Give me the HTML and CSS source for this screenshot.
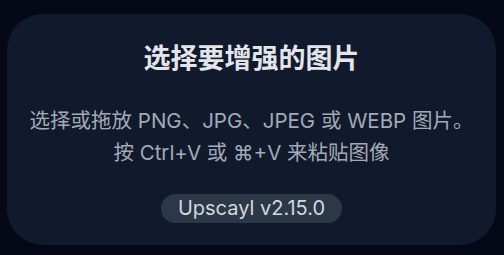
FILE: index.html
```html
<!DOCTYPE html>
<html lang="zh-CN">
<head>
<meta charset="utf-8">
<title>Upscayl</title>
<link rel="stylesheet" href="styles.css">
</head>
<body>
<main class="page">
  <section class="card">
    <h1 class="title">选择要增强的图片</h1>
    <p class="desc">选择或拖放 PNG、JPG、JPEG 或 WEBP 图片。<br>按 Ctrl+V 或 ⌘+V 来粘贴图像</p>
    <span class="badge">Upscayl v2.15.0</span>
  </section>
</main>
</body>
</html>
```

FILE: styles.css
```css
html, body {
  margin: 0;
  padding: 0;
  background: #050816;
}
body {
  width: 504px;
  height: 255px;
  overflow: hidden;
  font-family: "Inter", "Noto Sans CJK SC", sans-serif;
}
.page {
  padding: 14px 8px 10px 7px;
  height: 255px;
  box-sizing: border-box;
}
.card {
  height: 100%;
  box-sizing: border-box;
  background: #111a2c;
  border-radius: 36px;
  display: flex;
  flex-direction: column;
  align-items: center;
  padding-top: 27px;
}
.title {
  margin: 0;
  font-size: 27px;
  line-height: 36px;
  font-weight: 700;
  color: #e3e5ea;
}
.desc {
  margin: 28px 0 0;
  font-size: 20.5px;
  line-height: 32px;
  color: #a3aab7;
  text-align: center;
}
.badge {
  margin-top: 25px;
  height: 29px;
  line-height: 29px;
  padding: 0 17px;
  border-radius: 15px;
  background: #2c3748;
  color: #d3d7de;
  font-size: 20px;
}
```
